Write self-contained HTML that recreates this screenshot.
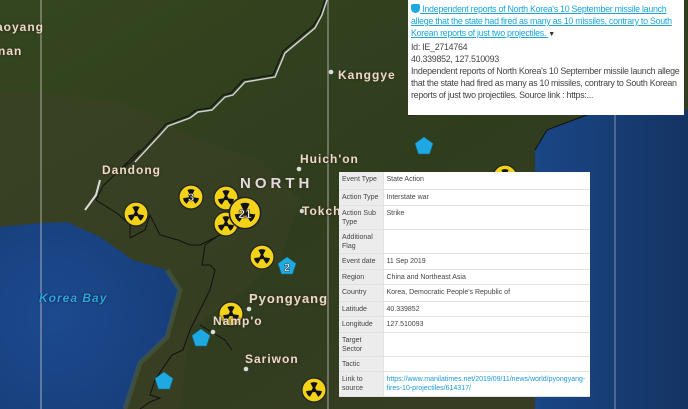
<!DOCTYPE html>
<html><head><meta charset="utf-8"><style>
html,body{margin:0;width:688px;height:409px;overflow:hidden}
body{position:relative;font-family:"Liberation Sans",sans-serif;background:#2c3a1f}
.map{position:absolute;left:0;top:0}
.lbl{position:absolute;color:#e8dcc8;font-weight:bold;font-size:12px;letter-spacing:1px;text-shadow:0 0 2px #3a3020,0 0 2px #3a3020}
.pop{position:absolute;left:408px;top:0;width:276px;height:115px;background:#fff;font-size:8.9px;line-height:12px;color:#444;padding:3px 1px 3px 3px;box-sizing:border-box;letter-spacing:-0.28px;white-space:nowrap;overflow:hidden}
.pop a{color:#1aa6d8;text-decoration:underline}
table{position:absolute;left:339px;top:172px;width:251px;border-collapse:collapse;background:#fff;font-size:7px;color:#444;table-layout:fixed}
td{border-bottom:1px solid #e2e2e2;padding:3px 2px 2px 3px;vertical-align:top;line-height:9px;overflow:hidden}
td.k{background:#ececec;border-right:1px solid #e2e2e2;white-space:nowrap}
td a{color:#1a9ad8;text-decoration:none}
</style></head><body>
<svg class="map" width="688" height="409" viewBox="0 0 688 409">
<defs>
<linearGradient id="land" x1="0" y1="0" x2="1" y2="1"><stop offset="0" stop-color="#34461f"/><stop offset=".5" stop-color="#2f3d1d"/><stop offset="1" stop-color="#3a3d25"/></linearGradient>
<radialGradient id="sea1" cx=".3" cy=".5" r=".8"><stop offset="0" stop-color="#1c4a8e"/><stop offset="1" stop-color="#173c78"/></radialGradient>
<linearGradient id="sea2" x1="0" y1="0" x2="1" y2="0"><stop offset="0" stop-color="#1a4686"/><stop offset="1" stop-color="#143463"/></linearGradient>
<g id="rad"><circle r="12" fill="#f2d318" stroke="#222" stroke-width="1.2"/><path d="M0 0 L-3.6 -7 A8 8 0 0 1 3.6 -7Z M0 0 L7.9 1.1 A8 8 0 0 1 4.2 6.8Z M0 0 L-4.2 6.8 A8 8 0 0 1 -7.9 1.1Z" fill="#111"/><circle r="2.2" fill="#111"/></g>
<path id="pent" d="M0 -9 L9 -2.5 L5.5 8 L-5.5 8 L-9 -2.5Z" fill="#1fa9e1" stroke="#0d6fa0" stroke-width=".5"/>
</defs>
<rect width="688" height="409" fill="url(#land)"/>
<path d="M0 90 L120 100 L200 140 L260 160 L300 200 L280 260 L230 300 L190 330 L180 409 L0 409Z" fill="#3d3f26" opacity=".5"/>
<path d="M0 227 L40 223 L67 222 L100 237 L133 260 L167 270 L180 290 L172 320 L167 337 L140 363 L127 407 L125 409 L0 409Z" fill="url(#sea1)"/>
<path d="M592 113 L560 125 L547 130 L535 150 L535 409 L688 409 L688 110Z" fill="url(#sea2)"/>
<path d="M125 409 L140 363 L167 337 L180 290 L167 270" fill="none" stroke="#4b5b3a" stroke-width="5" opacity=".6"/>
<line x1="41" y1="0" x2="41" y2="409" stroke="#c8c8c8" stroke-width=".8"/>
<line x1="328" y1="0" x2="328" y2="409" stroke="#c8c8c8" stroke-width=".8"/>
<line x1="615" y1="110" x2="615" y2="409" stroke="#9aaac0" stroke-width=".8"/>
<path d="M327 0 L322 15 L315 28 L285 53 L275 77 L245 82 L233 95 L225 97 L212 110 L198 112 L190 118 L168 126 L160 135 L135 162" fill="none" stroke="#cfcfcf" stroke-width="1.5"/>
<path d="M325 0 L320 15 L313 26 L283 51 L273 75 L243 80 L231 93 L223 95 L210 108 L196 110 L188 116 L166 124 L158 133 L133 160 L123 168" fill="none" stroke="#111" stroke-width="1"/>
<path d="M140 150 L103 186 L96 200 L118 214 L130 225 L130 238 L145 230 L150 215 L160 235 L178 240 L190 245 L200 245 L220 235 L226 230 L205 245 L202 265 L210 265 L215 270 L210 290 L200 310 L190 330 L183 350 L172 355 L165 365 L155 380 L150 395 L160 398 L150 402 L140 409" fill="none" stroke="#111" stroke-width="1"/>
<path d="M200 325 L225 340 L232 350" fill="none" stroke="#111" stroke-width="1"/>
<path d="M408 115 L540 110 L592 113 L560 125 L547 130 L535 150" fill="none" stroke="#111" stroke-width="1"/>
<path d="M100 180 L96 195 L85 210" fill="none" stroke="#ddd" stroke-width="2"/>
<g fill="#ddd"><circle cx="331" cy="72" r="2.3"/><circle cx="299" cy="169" r="2.3"/><circle cx="302" cy="211" r="2.3"/><circle cx="249" cy="309" r="2.3"/><circle cx="213" cy="332" r="2.3"/><circle cx="246" cy="369" r="2.3"/></g>
<use href="#rad" x="136" y="214"/><use href="#rad" x="191" y="197"/><use href="#rad" x="226" y="198"/><use href="#rad" x="226" y="224"/>
<use href="#rad" x="262" y="257"/><use href="#rad" x="231" y="314"/><use href="#rad" x="314" y="390"/><use href="#rad" x="505" y="177"/>
<g transform="translate(245,213) scale(1.3)"><use href="#rad"/></g>
<text x="191" y="201" font-size="11" font-weight="bold" fill="#fff" stroke="#333" stroke-width=".6" text-anchor="middle" font-family="Liberation Sans">3</text>
<text x="245" y="218" font-size="12" font-weight="bold" fill="#fff" stroke="#333" stroke-width=".6" text-anchor="middle" font-family="Liberation Sans">21</text>
<use href="#pent" x="287" y="266"/><use href="#pent" x="201" y="338"/><use href="#pent" x="164" y="381"/><use href="#pent" x="424" y="146"/>
<text x="287" y="271" font-size="11" font-weight="bold" fill="#fff" stroke="#234" stroke-width=".5" text-anchor="middle" font-family="Liberation Sans">2</text>
</svg>
<div class="lbl" style="left:-4px;top:20px">aoyang</div>
<div class="lbl" style="left:-2px;top:44px">nan</div>
<div class="lbl" style="left:338px;top:68px">Kanggye</div>
<div class="lbl" style="left:102px;top:163px">Dandong</div>
<div class="lbl" style="left:300px;top:152px">Huich'on</div>
<div class="lbl" style="left:302px;top:204px">Tokch'o</div>
<div class="lbl" style="left:240px;top:175px;font-size:15px;letter-spacing:4px;color:#ddd">NORTH</div>
<div class="lbl" style="left:249px;top:291px;font-size:13px">Pyongyang</div>
<div class="lbl" style="left:213px;top:314px">Namp'o</div>
<div class="lbl" style="left:245px;top:352px">Sariwon</div>
<div class="lbl" style="left:39px;top:291px;color:#2aa6e0;font-style:italic;text-shadow:0 0 2px #113">Korea Bay</div>
<div class="pop"><a><span style="display:inline-block;width:9px;height:9px;background:#1fa9e1;border-radius:2px 2px 5px 5px;vertical-align:-1px"></span> Independent reports of North Korea's 10 September missile launch<br>allege that the state had fired as many as 10 missiles, contrary to South<br>Korean reports of just two projectiles. </a> <span style="font-size:7px;color:#333">▼</span><br>Id: IE_2714764<br>40.339852, 127.510093<br>Independent reports of North Korea's 10 September missile launch allege<br>that the state had fired as many as 10 missiles, contrary to South Korean<br>reports of just two projectiles. Source link : https:...</div>
<table>
<colgroup><col style="width:44px"><col></colgroup>
<tr style="height:17px"><td class="k">Event Type</td><td>State Action</td></tr>
<tr style="height:16px"><td class="k">Action Type</td><td>Interstate war</td></tr>
<tr style="height:24px"><td class="k">Action Sub<br>Type</td><td>Strike</td></tr>
<tr style="height:24px"><td class="k">Additional<br>Flag</td><td></td></tr>
<tr style="height:16px"><td class="k">Event date</td><td>11 Sep 2019</td></tr>
<tr style="height:15px"><td class="k">Region</td><td>China and Northeast Asia</td></tr>
<tr style="height:17px"><td class="k">Country</td><td>Korea, Democratic People's Republic of</td></tr>
<tr style="height:15px"><td class="k">Latitude</td><td>40.339852</td></tr>
<tr style="height:16px"><td class="k">Longitude</td><td>127.510093</td></tr>
<tr style="height:24px"><td class="k">Target<br>Sector</td><td></td></tr>
<tr style="height:15px"><td class="k">Tactic</td><td></td></tr>
<tr style="height:25px"><td class="k">Link to<br>source</td><td><a>https://www.manilatimes.net/2019/09/11/news/world/pyongyang-fires-10-projectiles/614317/</a></td></tr>
</table>
</body></html>
